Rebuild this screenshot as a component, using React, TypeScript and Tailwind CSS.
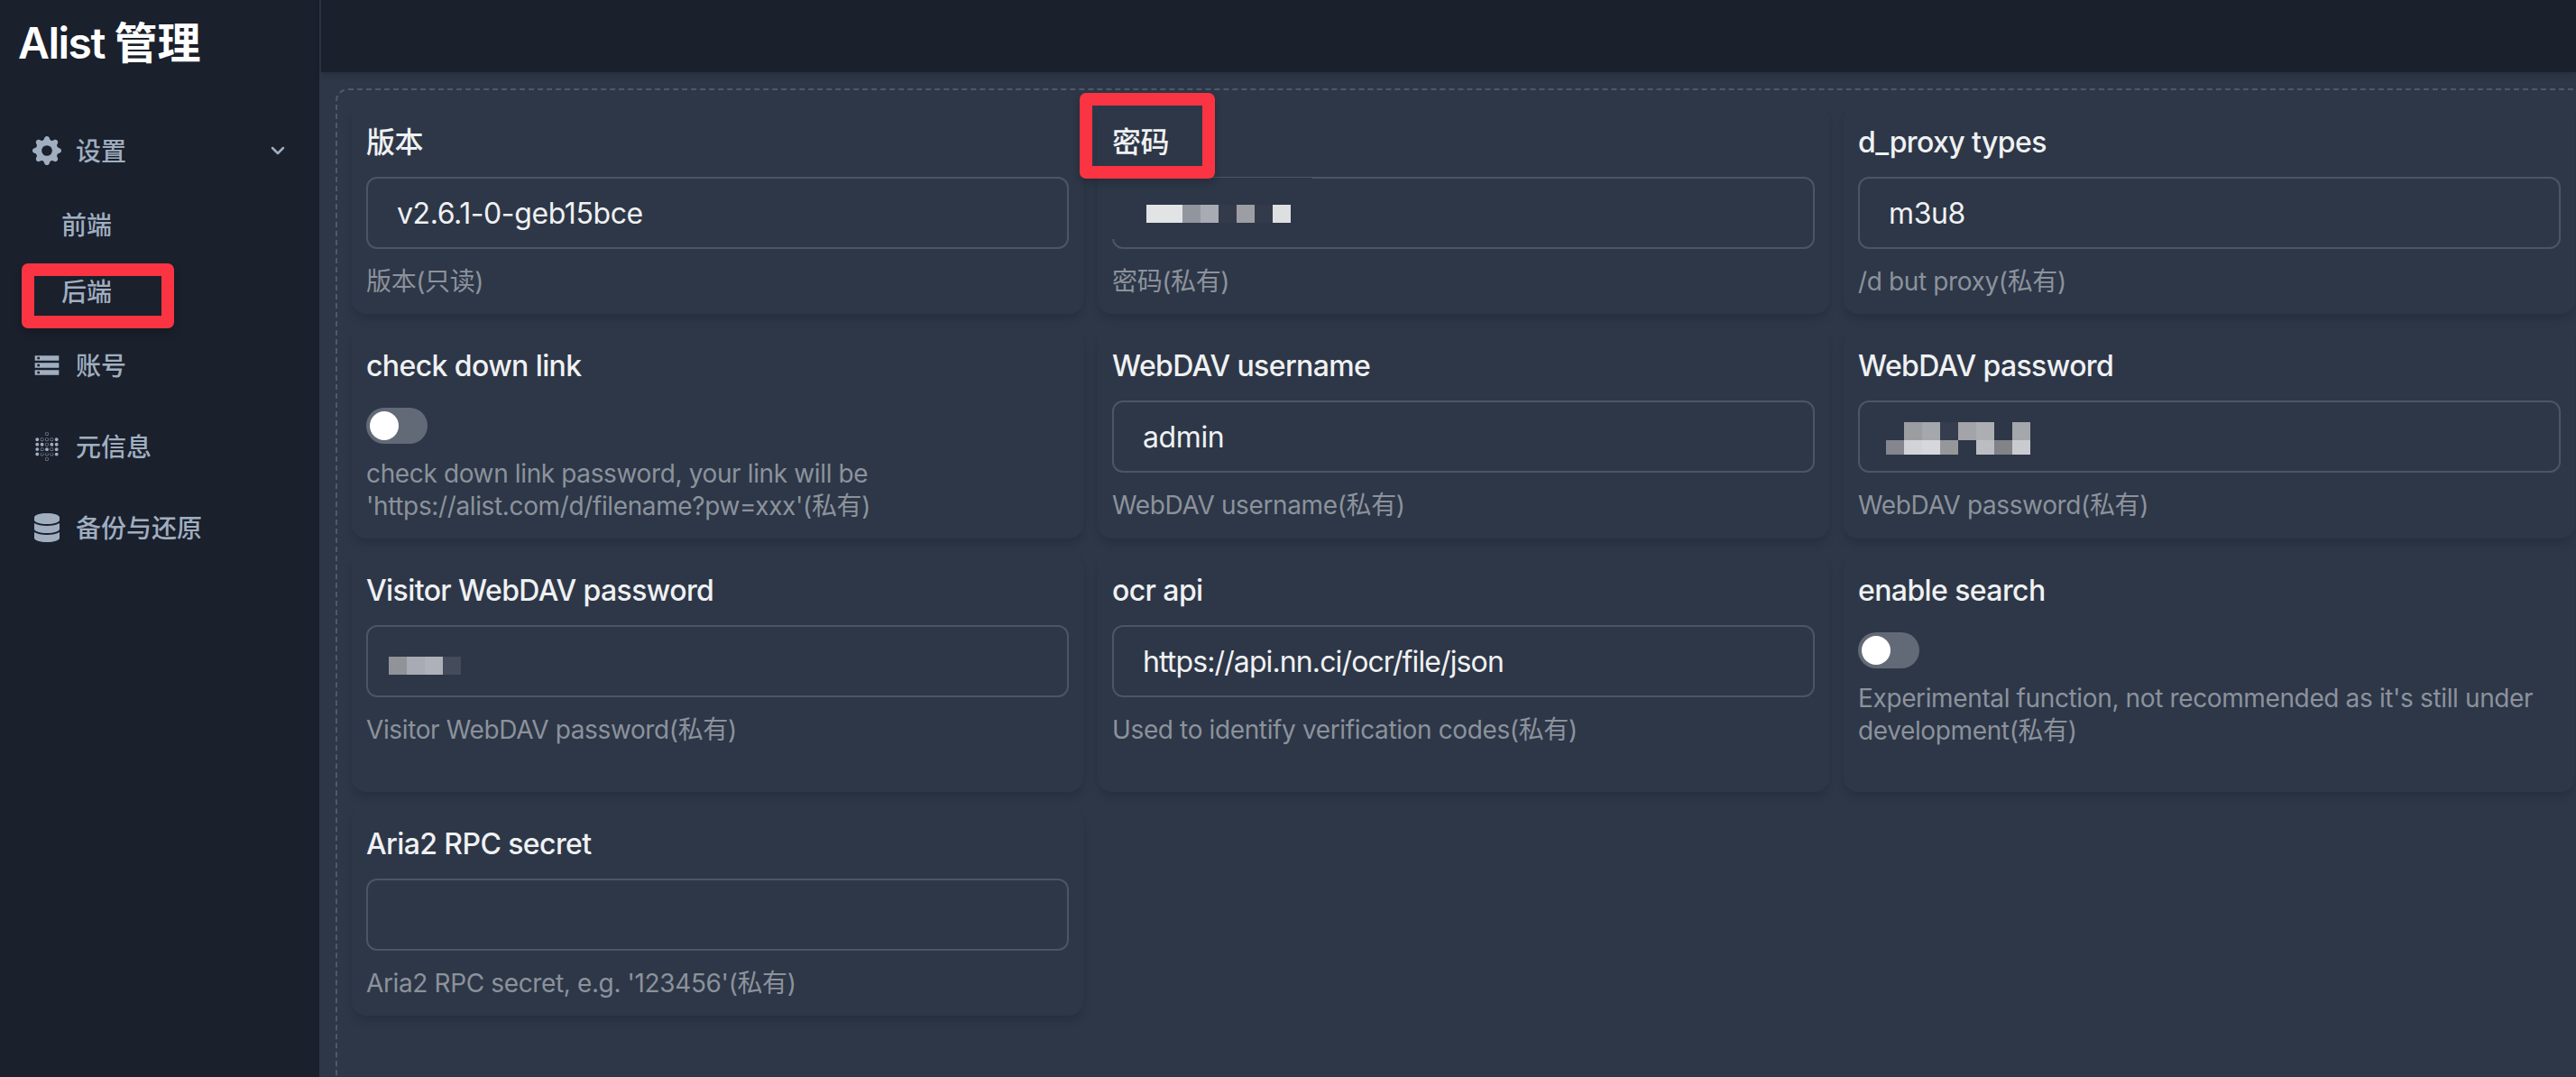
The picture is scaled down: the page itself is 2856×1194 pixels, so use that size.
import type { ReactNode } from 'react';
import { BsGearFill } from 'react-icons/bs';
import { FaDatabase } from 'react-icons/fa';
import { FiChevronDown } from 'react-icons/fi';
import { MdStorage } from 'react-icons/md';
import { SiMetabase } from 'react-icons/si';

function NavItem({ icon, children, open }: { icon: ReactNode; children: ReactNode; open?: boolean }) {
    return (
        <a className="flex h-[90px] items-center pr-[34px] pl-[36px] text-[28px] font-medium text-[#a0aec0]">
            <span className="mr-4 flex w-8 justify-center text-[32px]">{icon}</span>
            <span className="grow pt-px">{children}</span>
            {open && <FiChevronDown className="size-6" strokeWidth={2.5} />}
        </a>
    );
}

function Setting({ label, help, children }: { label: string; help: ReactNode; children: ReactNode }) {
    return (
        <div className="rounded-[16px] p-4 shadow-[0_8px_12px_-2px_rgba(0,0,0,0.1),0_4px_8px_-2px_rgba(0,0,0,0.06)]">
            <h4 className="mb-[14px] pt-[2px] text-[32px] leading-[48px] font-medium tracking-[-0.6px] text-[#f0f1f2]">{label}</h4>
            {children}
            <p className="text-[28px] leading-[36px] tracking-[-0.37px] text-[#8c929b]">{help}</p>
        </div>
    );
}

function Field({ children }: { children?: ReactNode }) {
    return (
        <div className="relative mb-[18px] flex h-20 items-center rounded-[12px] border-2 border-[#4c5663] pt-[2px] pl-8 text-[32px] tracking-[-0.4px] text-[#f0f1f2]">
            {children}
        </div>
    );
}

function Toggle() {
    return (
        <div className="mb-[15px] pt-2">
            <div className="h-10 w-[68px] rounded-full bg-[#626a77] p-1">
                <div className="size-8 rounded-full bg-white"></div>
            </div>
        </div>
    );
}

export default function App() {
    return (
        <main
            lang="zh-CN"
            className="flex h-[1194px] w-[2856px] overflow-hidden bg-[#2d3748] font-['Inter','Noto_Sans_CJK_SC',sans-serif]"
        >
            <aside className="w-[356px] shrink-0 border-r-2 border-[#2d3748] bg-[#1a202c]">
                <h1 className="h-[122px] pt-3 pl-5 text-[48px] leading-[72px] font-semibold tracking-[-1.5px] text-white">
                    Alist <span className="tracking-normal">管理</span>
                </h1>
                <nav>
                    <NavItem icon={<BsGearFill />} open>设置</NavItem>
                    <div className="text-[28px] font-medium text-[#a0aec0]">
                        <a className="flex h-[75px] items-center pl-[68px]">前端</a>
                        <div className="relative">
                            <a className="flex h-[73px] items-center pl-[68px]">后端</a>
                            <div className="absolute top-[5px] left-[24px] h-[72px] w-[169px] rounded-[7px] border-14 border-[#fa3442] shadow-[0_4px_10px_rgba(0,0,0,0.2)]"></div>
                        </div>
                    </div>
                    <NavItem icon={<MdStorage />}>账号</NavItem>
                    <NavItem icon={<SiMetabase />}>元信息</NavItem>
                    <NavItem icon={<FaDatabase />}>备份与还原</NavItem>
                </nav>
            </aside>

            <section className="w-[2500px] shrink-0">
                <header className="h-20 bg-[#1a202c] shadow-[0_2px_8px_rgba(0,0,0,0.2)]"></header>
                <div className="mt-[18px] ml-4 h-[1200px] w-[2502px] rounded-[14px] border-2 border-dashed border-[#4f5966] p-4">
                    <div className="grid w-[2465px] grid-cols-3 grid-rows-[232px_233px_265px_232px] gap-4">
                        <Setting label="版本" help="版本(只读)">
                            <Field>v2.6.1-0-geb15bce</Field>
                        </Setting>

                        <div className="relative grid">
                            <Setting label="密码" help="密码(私有)">
                                <Field>
                                    {/* hidden value */}
                                    <div className="absolute -top-px -left-1 h-[68px] w-[224px] bg-[#2d3748]"></div>
                                    <div className="relative ml-1 flex">
                                        <i className="size-5 bg-[#e2e3e5]"></i>
                                        <i className="size-5 bg-[#e2e3e5]"></i>
                                        <i className="size-5 bg-[#91959d]"></i>
                                        <i className="size-5 bg-[#a8abb4]"></i>
                                        <i className="size-5 bg-[#333b4a]"></i>
                                        <i className="size-5 bg-[#9d9ea3]"></i>
                                        <i className="size-5 bg-[#333b4a]"></i>
                                        <i className="size-5 bg-[#dddfe1]"></i>
                                    </div>
                                </Field>
                            </Setting>
                            <div className="absolute -top-[13px] -left-5 h-[95px] w-[150px] rounded-[7px] border-14 border-[#fa3442] shadow-[0_4px_10px_rgba(0,0,0,0.2)]"></div>
                        </div>

                        <Setting label="d_proxy types" help="/d but proxy(私有)">
                            <Field>m3u8</Field>
                        </Setting>

                        <Setting
                            label="check down link"
                            help={<>check down link password, your link will be<br />'https://alist.com/d/filename?pw=xxx'(私有)</>}
                        >
                            <Toggle />
                        </Setting>

                        <Setting label="WebDAV username" help="WebDAV username(私有)">
                            <Field>admin</Field>
                        </Setting>

                        <Setting label="WebDAV password" help="WebDAV password(私有)">
                            <Field>
                                <div className="-ml-[3px] grid grid-cols-[repeat(8,20px)] grid-rows-[20px_16px] pt-[2px]">
                                    <i></i>
                                    <i className="bg-[#9b9da1]"></i>
                                    <i className="bg-[#a4a7ab]"></i>
                                    <i className="bg-[#353d4e]"></i>
                                    <i className="bg-[#a3a4a8]"></i>
                                    <i className="bg-[#adaeb2]"></i>
                                    <i></i>
                                    <i className="bg-[#a4a7ab]"></i>
                                    <i className="bg-[#85868e]"></i>
                                    <i className="bg-[#d2d3d8]"></i>
                                    <i className="bg-[#d6d7dc]"></i>
                                    <i className="bg-[#959799]"></i>
                                    <i></i>
                                    <i className="bg-[#bcbdc2]"></i>
                                    <i className="bg-[#828389]"></i>
                                    <i className="bg-[#cacbcf]"></i>
                                </div>
                            </Field>
                        </Setting>

                        <Setting label="Visitor WebDAV password" help="Visitor WebDAV password(私有)">
                            <Field>
                                <div className="-ml-[9px] flex pt-[8px]">
                                    <i className="size-5 bg-[#909397]"></i>
                                    <i className="size-5 bg-[#a8abb3]"></i>
                                    <i className="size-5 bg-[#aeb1b9]"></i>
                                    <i className="size-5 bg-[#444b5a]"></i>
                                </div>
                            </Field>
                        </Setting>

                        <Setting label="ocr api" help="Used to identify verification codes(私有)">
                            <Field><span className="tracking-[-0.88px]">https://api.nn.ci/ocr/file/json</span></Field>
                        </Setting>

                        <Setting
                            label="enable search"
                            help={<>Experimental function, not recommended as it's still under<br />development(私有)</>}
                        >
                            <Toggle />
                        </Setting>

                        <Setting label="Aria2 RPC secret" help="Aria2 RPC secret, e.g. '123456'(私有)">
                            <Field />
                        </Setting>
                    </div>
                </div>
            </section>
        </main>
    );
}
